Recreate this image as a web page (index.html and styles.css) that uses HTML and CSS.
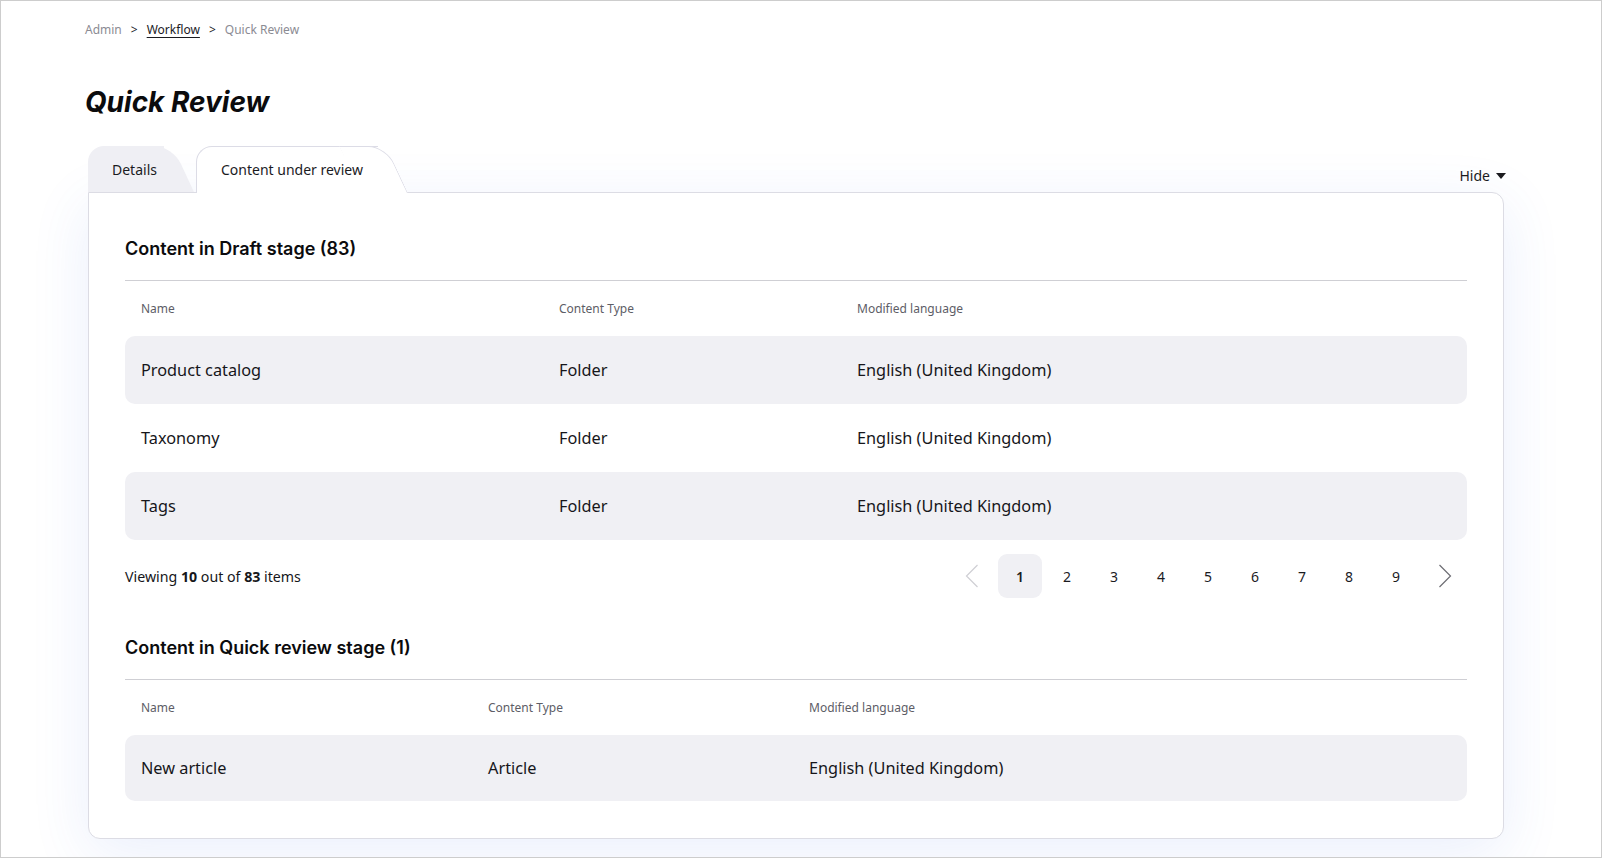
FILE: index.html
```html
<!DOCTYPE html>
<html lang="en">
<head>
<meta charset="utf-8">
<title>Quick Review</title>
<link rel="stylesheet" href="styles.css">
</head>
<body>
<div class="frame">
  <main class="page">
    <nav class="breadcrumb">
      <span class="crumb">Admin</span>
      <span class="sep">&gt;</span>
      <a class="crumb link" href="#">Workflow</a>
      <span class="sep">&gt;</span>
      <span class="crumb">Quick Review</span>
    </nav>

    <h1 class="title">Quick Review</h1>

    <div class="tabs-bar">
      <div class="tabs">
        <div class="tab"><span class="tab-label">Details</span></div>
        <div class="tab active"><span class="tab-label">Content under review</span></div>
      </div>
      <button class="hide">Hide
        <svg width="10" height="6" viewBox="0 0 10 6"><path d="M0 0h10L5 6z" fill="#1b1b1f"/></svg>
      </button>
    </div>

    <section class="card">
      <div class="stage">
        <h2 class="stage-title">Content in Draft stage (83)</h2>
        <div class="grid draft">
          <div class="row head"><span>Name</span><span>Content Type</span><span>Modified language</span></div>
          <div class="row shaded"><span>Product catalog</span><span>Folder</span><span>English (United Kingdom)</span></div>
          <div class="row"><span>Taxonomy</span><span>Folder</span><span>English (United Kingdom)</span></div>
          <div class="row shaded"><span>Tags</span><span>Folder</span><span>English (United Kingdom)</span></div>
        </div>
        <div class="footer">
          <p class="viewing">Viewing <b>10</b> out of <b>83</b> items</p>
          <div class="pager">
            <button class="pg arrow prev" aria-label="Previous"><svg width="14" height="24" viewBox="0 0 14 24"><path d="M12.5 1L1.5 12l11 11" fill="none" stroke="#cfcfd4" stroke-width="1.2"/></svg></button>
            <button class="pg current">1</button>
            <button class="pg">2</button>
            <button class="pg">3</button>
            <button class="pg">4</button>
            <button class="pg">5</button>
            <button class="pg">6</button>
            <button class="pg">7</button>
            <button class="pg">8</button>
            <button class="pg">9</button>
            <button class="pg arrow next" aria-label="Next"><svg width="14" height="24" viewBox="0 0 14 24"><path d="M1.5 1l11 11-11 11" fill="none" stroke="#6d6d73" stroke-width="1.2"/></svg></button>
          </div>
        </div>
      </div>

      <div class="stage second">
        <h2 class="stage-title">Content in Quick review stage (1)</h2>
        <div class="grid quick">
          <div class="row head"><span>Name</span><span>Content Type</span><span>Modified language</span></div>
          <div class="row shaded last"><span>New article</span><span>Article</span><span>English (United Kingdom)</span></div>
        </div>
      </div>
    </section>
  </main>
</div>
</body>
</html>
```

FILE: styles.css
```css
* { box-sizing: border-box; }

html, body {
  margin: 0;
  padding: 0;
  background: #ffffff;
}

body {
  font-family: "Noto Sans", "Open Sans", sans-serif;
  color: #1b1b1f;
}

.frame {
  width: 1602px;
  height: 858px;
  border: 1px solid #cdcdcd;
  overflow: hidden;
  background: #ffffff;
}

.page {
  padding: 20px 97px 0 84px;
}

/* breadcrumb */
.breadcrumb {
  display: flex;
  align-items: center;
  gap: 8px;
  font-size: 12px;
  line-height: 18px;
  color: #8b8b93;
}
.breadcrumb .link {
  color: #1b1b1f;
  text-decoration: underline;
  text-underline-offset: 3px;
}
.breadcrumb .sep {
  color: #1b1b1f;
  font-size: 12px;
  padding: 0 1px;
}

/* title */
.title {
  margin: 45px 0 0;
  font-family: Inter, "Noto Sans", sans-serif;
  font-style: italic;
  font-weight: 700;
  font-size: 28px;
  line-height: 36px;
  letter-spacing: 0;
  color: #0b0b0d;
}

/* tabs */
.tabs-bar {
  display: flex;
  align-items: flex-end;
  justify-content: space-between;
  margin-top: 26px;
  padding-left: 3px;
  position: relative;
  z-index: 2;
}
.tabs {
  display: flex;
  gap: 2px;
}
.tab {
  position: relative;
  height: 46px;
  padding: 0 37px 0 24px;
  display: flex;
  align-items: center;
  font-size: 14px;
  color: #1b1b1f;
}
.tab::before,
.tab::after {
  content: "";
  position: absolute;
  top: 0;
  bottom: 0;
  background: #efeff4;
}
.tab::before {
  left: 0;
  right: 30px;
  border-top-left-radius: 16px;
}
.tab::after {
  right: 0;
  width: 46px;
  border-top-right-radius: 18px;
  transform: skewX(25deg);
  transform-origin: 100% 100%;
}
.tab.active {
  padding: 0 45px 0 25px;
  height: 47px;
  margin-bottom: -1px;
}
.tab.active::before,
.tab.active::after {
  background: #ffffff;
  border-top: 1px solid #dcdce6;
}
.tab.active::before {
  border-left: 1px solid #dcdce6;
}
.tab.active::after {
  border-right: 1px solid #dcdce6;
}
.tab-label {
  position: relative;
  z-index: 1;
}

.hide {
  display: flex;
  align-items: center;
  gap: 6px;
  margin: 0 -2px 6px 0;
  padding: 0;
  border: 0;
  background: none;
  font-family: "Noto Sans", sans-serif;
  font-size: 14px;
  line-height: 20px;
  color: #1b1b1f;
}

/* card */
.card {
  margin-left: 3px;
  border: 1px solid #dcdce4;
  border-radius: 0 12px 12px 12px;
  background: #ffffff;
  box-shadow: 0 14px 60px rgba(60, 110, 230, 0.11);
  padding: 44px 36px 37px;
  position: relative;
  z-index: 1;
}

.stage-title {
  margin: 0;
  padding-bottom: 19px;
  border-bottom: 1px solid #cfcfd4;
  font-family: Inter, "Noto Sans", sans-serif;
  font-weight: 600;
  font-size: 18px;
  line-height: 24px;
  color: #0b0b0d;
}

.stage.second {
  margin-top: 38px;
}

.grid .row {
  display: grid;
  align-items: center;
  height: 68px;
  padding: 0 16px;
  border-radius: 10px;
  font-size: 16.3px;
  color: #16161a;
}
.grid .row.last { height: 66px; }
.grid .row.head {
  height: 55px;
  font-size: 12px;
  color: #5d5d66;
}
.grid .row.shaded {
  background: #f0f0f4;
}
.grid.draft .row {
  grid-template-columns: 418px 298px 1fr;
}
.grid.quick .row {
  grid-template-columns: 347px 321px 1fr;
}

.footer {
  display: flex;
  align-items: center;
  justify-content: space-between;
  margin-top: 14px;
}
.viewing {
  margin: 0;
  font-size: 14.2px;
  color: #16161a;
}
.viewing b { font-weight: 700; }

.pager {
  display: flex;
  align-items: center;
  gap: 3px;
}
.pg {
  width: 44px;
  height: 44px;
  border: 0;
  border-radius: 9px;
  background: none;
  padding: 0;
  font-family: "Noto Sans", sans-serif;
  font-size: 14px;
  color: #1b1b1f;
  display: flex;
  align-items: center;
  justify-content: center;
}
.pg.current {
  background: #f0f0f4;
  font-weight: 600;
}
.pg.prev { margin-right: 1px; }
.pg.next { margin-left: 2px; }
```
